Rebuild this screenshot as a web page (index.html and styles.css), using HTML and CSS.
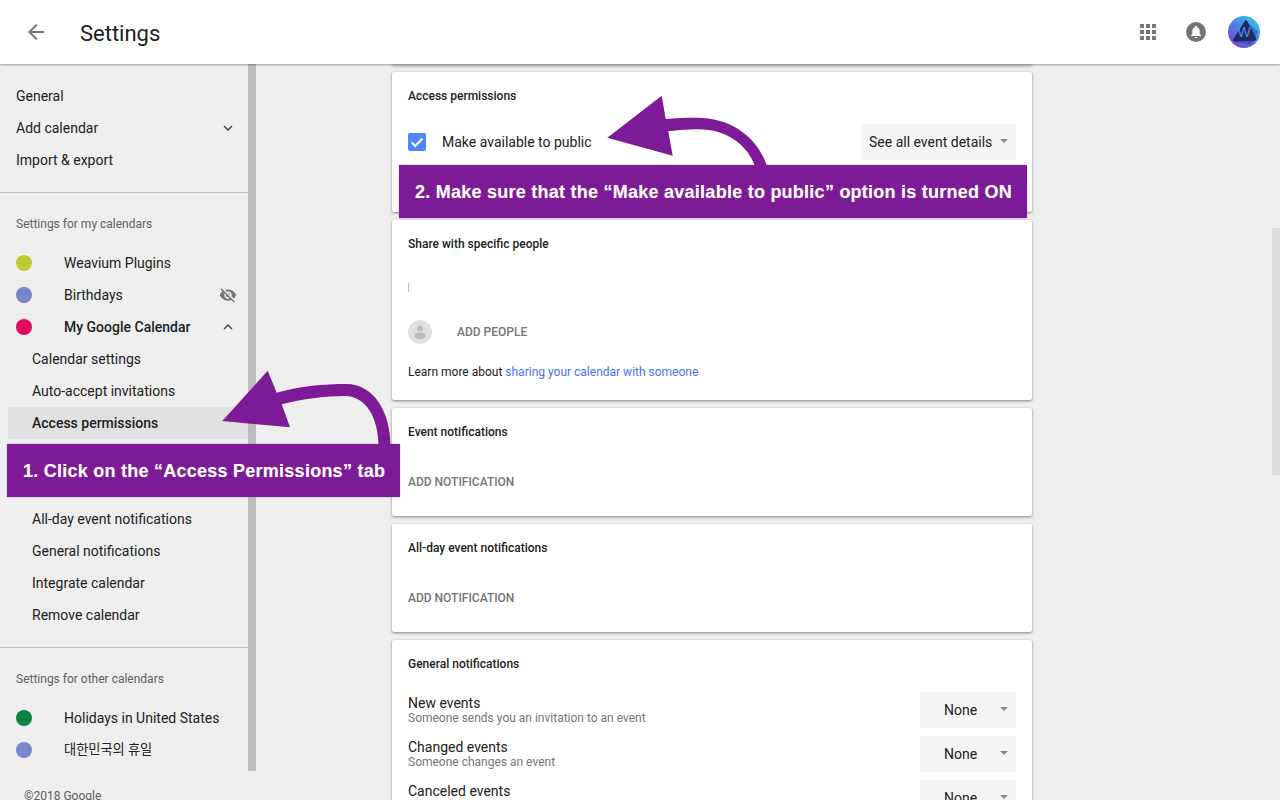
FILE: index.html
```html
<!DOCTYPE html>
<html lang="en">
<head>
<meta charset="utf-8">
<title>Settings</title>
<link rel="stylesheet" href="styles.css">
</head>
<body>
<div class="app">
  <header class="topbar">
    <svg class="back" viewBox="0 0 24 24" width="24" height="24"><path d="M20 11H7.830l5.590-5.590L12 4l-8 8 8 8 1.410-1.410L7.830 13H20v-2z"/></svg>
    <h1 class="title">Settings</h1>
    <div class="top-icons">
      <svg class="apps" viewBox="0 0 16 16" width="16" height="16"><path d="M0 0h4v4H0zM6 0h4v4H6zM12 0h4v4h-4zM0 6h4v4H0zM6 6h4v4H6zM12 6h4v4h-4zM0 12h4v4H0zM6 12h4v4H6zM12 12h4v4h-4z"/></svg>
      <svg class="bell" viewBox="0 0 20 20" width="20" height="20"><circle cx="10" cy="10" r="10" fill="#757575"/><path d="M10 3.800c-.6 0-1 .4-1 1v.5C7.300 5.800 6.300 7.200 6.300 9v3L5 13.300v.7h10v-.7L13.700 12V9c0-1.800-1-3.200-2.700-3.700v-.5c0-.6-.4-1-1-1z" fill="#fff"/><path d="M8.800 15h2.400c0 .6-.5 1-1.200 1s-1.200-.4-1.200-1z" fill="#fff"/></svg>
      <svg class="avatar" viewBox="0 0 32 32" width="32" height="32">
        <defs><linearGradient id="av" x1="0.85" y1="0.05" x2="0.2" y2="0.95"><stop offset="0" stop-color="#36c6f2"/><stop offset="0.5" stop-color="#4a7fe0"/><stop offset="1" stop-color="#7a45d8"/></linearGradient></defs>
        <circle cx="16" cy="16" r="16" fill="url(#av)"/>
        <path d="M4 25 L18 5 L30 16 L23 29 Z" fill="#3c3f9e" opacity=".55"/>
        <path d="M17 4.500 C18 4 19 4.500 19.500 5.500 L28 22 C28.500 23.500 27.500 25 26 25 L7 25.500 C5.500 25.500 5 24 5.500 23 Z" fill="#1f2a63"/>
        <text class="avatar-w" x="16" y="21" text-anchor="middle">W</text>
      </svg>
    </div>
  </header>
  <div class="body">
    <aside class="side">
      <nav class="nav">
        <div class="row">General</div>
        <div class="row">Add calendar<svg class="chev" viewBox="0 0 24 24" width="18" height="18"><path d="M16.590 8.590L12 13.170 7.410 8.590 6 10l6 6 6-6z"/></svg></div>
        <div class="row">Import &amp; export</div>
        <div class="rule"></div>
        <div class="label">Settings for my calendars</div>
        <div class="row cal"><span class="dot dot-lime"></span>Weavium Plugins</div>
        <div class="row cal"><span class="dot dot-blue"></span>Birthdays<svg class="eye" viewBox="0 0 24 24" width="18" height="18"><path d="M12 7c2.760 0 5 2.240 5 5 0 .65-.13 1.260-.36 1.830l2.920 2.920c1.510-1.260 2.700-2.890 3.430-4.750-1.730-4.390-6-7.500-11-7.500-1.400 0-2.740.25-3.980.7l2.160 2.160C10.740 7.130 11.350 7 12 7zM2 4.270l2.280 2.280.46.46C3.080 8.300 1.780 10.020 1 12c1.730 4.390 6 7.500 11 7.500 1.550 0 3.030-.3 4.380-.84l.42.42L19.730 22 21 20.730 3.270 3 2 4.270zM7.530 9.800l1.550 1.550c-.05.21-.08.43-.08.65 0 1.660 1.340 3 3 3 .22 0 .44-.03.65-.08l1.550 1.550c-.67.33-1.410.53-2.200.53-2.760 0-5-2.240-5-5 0-.79.2-1.530.53-2.200zm4.310-.78l3.150 3.150.02-.16c0-1.660-1.340-3-3-3l-.17.01z"/></svg></div>
        <div class="row cal strong"><span class="dot dot-red"></span>My Google Calendar<svg class="chev" viewBox="0 0 24 24" width="18" height="18"><path d="M12 8l-6 6 1.410 1.410L12 10.830l4.590 4.580L18 14z"/></svg></div>
        <div class="row sub">Calendar settings</div>
        <div class="row sub">Auto-accept invitations</div>
        <div class="row sub active">Access permissions</div>
        <div class="hidden-rows"></div>
        <div class="row sub">All-day event notifications</div>
        <div class="row sub">General notifications</div>
        <div class="row sub">Integrate calendar</div>
        <div class="row sub">Remove calendar</div>
        <div class="rule"></div>
        <div class="label">Settings for other calendars</div>
        <div class="row cal"><span class="dot dot-green"></span>Holidays in United States</div>
        <div class="row cal"><span class="dot dot-blue"></span><span class="ko">대한민국의 휴일</span></div>
        <div class="copyright">©2018 Google</div>
      </nav>
      <div class="thumb"></div>
    </aside>
    <main class="content">
      <div class="stub"></div>
      <section class="card card-access">
        <h2 class="card-title">Access permissions</h2>
        <div class="perm-row">
          <span class="check"><svg viewBox="0 0 18 18" width="18" height="18"><path d="M3.800 9.500l3.500 3.500L14.500 5.500" fill="none" stroke="#fff" stroke-width="2"/></svg></span>
          <span class="perm-text">Make available to public</span>
          <span class="select select-wide">See all event details<i class="caret"></i></span>
        </div>
      </section>
      <section class="card card-share">
        <h2 class="card-title">Share with specific people</h2>
        <div class="cursor"></div>
        <div class="add-people">
          <svg class="person" viewBox="0 0 24 24" width="24" height="24"><circle cx="12" cy="12" r="12" fill="#e0e0e0"/><circle cx="12" cy="8.500" r="3" fill="#bdbdbd"/><ellipse cx="12" cy="15.800" rx="6" ry="3.300" fill="#bdbdbd"/></svg>
          <span class="action">ADD PEOPLE</span>
        </div>
        <p class="learn">Learn more about <a class="link">sharing your calendar with someone</a></p>
      </section>
      <section class="card card-notif">
        <h2 class="card-title">Event notifications</h2>
        <div class="action action-notif">ADD NOTIFICATION</div>
      </section>
      <section class="card card-notif">
        <h2 class="card-title">All-day event notifications</h2>
        <div class="action action-notif">ADD NOTIFICATION</div>
      </section>
      <section class="card card-general">
        <h2 class="card-title">General notifications</h2>
        <div class="gen-list">
          <div class="gen-row">
            <div class="gen-text"><div class="gen-name">New events</div><div class="gen-desc">Someone sends you an invitation to an event</div></div>
            <span class="select select-none">None<i class="caret"></i></span>
          </div>
          <div class="gen-row">
            <div class="gen-text"><div class="gen-name">Changed events</div><div class="gen-desc">Someone changes an event</div></div>
            <span class="select select-none">None<i class="caret"></i></span>
          </div>
          <div class="gen-row">
            <div class="gen-text"><div class="gen-name">Canceled events</div><div class="gen-desc">Someone cancels an event</div></div>
            <span class="select select-none">None<i class="caret"></i></span>
          </div>
        </div>
      </section>
    </main>
    <div class="page-track"><div class="page-thumb"></div></div>
  </div>
  <svg class="arrows" viewBox="0 0 1280 800" width="1280" height="800">
    <path class="arrow" d="M222.300 421 L267.700 370.700 L276.700 392.700 C300 386 325 384 346 384 C374 384 390.500 412 390.500 446 L378.500 446 C378.500 418 366 396 345 396 C325 396 302 399 281.700 404.300 L290 427.300 Z"/>
    <path class="arrow" d="M607.300 137.700 L661.700 95.700 L665.700 119 C675 118 686 117.700 696.700 117.700 C732 117.700 758 138 767 166 L755 166 C747 145 727 129.300 698 129.300 C688 129.300 678 130 668.300 131.300 L672.700 155.700 Z"/>
  </svg>
  <div class="callout callout-one">1. Click on the “Access Permissions” tab</div>
  <div class="callout callout-two">2. Make sure that the “Make available to public” option is turned ON</div>
</div>
</body>
</html>
```
FILE: styles.css
```css
* { box-sizing: border-box; }
html, body { margin: 0; padding: 0; }
body {
  font-family: Roboto, "Noto Sans CJK KR", sans-serif;
  font-size: 14px;
  color: #212121;
  background: #eeeeee;
}
.app { position: relative; width: 1280px; height: 800px; overflow: hidden; background: #eeeeee; }

.topbar {
  position: relative;
  z-index: 2;
  height: 64px;
  background: #fff;
  display: flex;
  align-items: center;
  padding: 0 20px 0 24px;
  box-shadow: 0 1px 2px rgba(0, 0, 0, .35);
}
.back { fill: #757575; margin-right: 32px; }
.title { margin: 2px 0 0; font-size: 22px; font-weight: 400; color: #212121; }
.top-icons { margin-left: auto; display: flex; align-items: center; }
.apps { fill: #757575; margin-right: 30px; }
.bell { margin-right: 22px; }
.avatar-w { font-family: "Liberation Sans", sans-serif; font-size: 14px; font-weight: 400; fill: #4f8fe6; }

.body { display: flex; height: 736px; }
.side { width: 256px; display: flex; align-items: flex-start; flex: none; }
.nav { width: 248px; padding-top: 16px; flex: none; }
.thumb { width: 8px; height: 707px; background: #bdbdbd; flex: none; }

.row { height: 32px; display: flex; align-items: center; padding: 0 8px 0 16px; }
.chev { fill: #424242; margin-left: auto; margin-right: 3px; }
.eye { fill: #757575; margin-left: auto; margin-right: 3px; }
.rule { height: 1px; background: #bdbdbd; margin-top: 16px; }
.label { height: 32px; margin: 15px 0 7px; padding-left: 16px; font-size: 12px; line-height: 32px; color: #616161; }
.dot { width: 16px; height: 16px; border-radius: 50%; margin-right: 32px; flex: none; }
.dot-lime { background: #c0ca33; }
.dot-blue { background: #7986cb; }
.dot-red { background: #e00b5f; }
.dot-green { background: #0b8043; }
.ko { font-size: 13.2px; line-height: 16px; margin-top: -1px; }
.strong { font-weight: 500; }
.sub { margin-left: 8px; padding-left: 24px; }
.active { background: #e0e0e0; font-weight: 500; border-radius: 2px 0 0 2px; }
.hidden-rows { height: 64px; }
.copyright { margin-top: 23px; padding-left: 24px; font-size: 12px; line-height: 14px; color: #616161; }

.content { width: 1016px; padding-left: 136px; flex: none; }
.stub { width: 640px; height: 1px; margin-bottom: 7px; background: #d0d0d0; box-shadow: 0 1px 3px rgba(0, 0, 0, .55); }
.card {
  width: 640px;
  background: #fff;
  border-radius: 2px;
  padding: 16px;
  margin-bottom: 8px;
  box-shadow: 0 1px 3px rgba(0, 0, 0, .45);
}
.card-title { margin: 0; font-size: 12px; line-height: 16px; font-weight: 500; color: #212121; }
.card-access { height: 140px; }
.perm-row { display: flex; align-items: center; margin-top: 20px; height: 36px; }
.check { width: 18px; height: 18px; border-radius: 2px; background: #4d86f5; margin-right: 16px; display: block; flex: none; }
.check svg { display: block; }
.select {
  display: flex;
  align-items: center;
  height: 36px;
  background: #f5f5f5;
  border-radius: 2px;
  position: relative;
  flex: none;
}
.select-wide { width: 155px; margin-left: auto; padding-left: 8px; }
.select-none { width: 96px; margin-left: auto; padding-left: 24px; }
.caret {
  position: absolute;
  right: 8px;
  top: 15px;
  width: 0;
  height: 0;
  border-left: 4px solid transparent;
  border-right: 4px solid transparent;
  border-top: 4px solid #8a8a8a;
}
.card-share { height: 180px; }
.cursor { width: 1px; height: 9px; margin-top: 31px; background: #b9b4f0; }
.add-people { display: flex; align-items: center; height: 24px; margin-top: 28px; }
.person { margin-right: 25px; flex: none; }
.action { font-size: 12px; font-weight: 500; color: #757575; line-height: 16px; }
.learn { margin: 20px 0 0; font-size: 12px; line-height: 16px; color: #212121; }
.link { color: #4b72ee; }
.card-notif { height: 108px; }
.action-notif { margin-top: 34px; }
.card-general { height: 200px; }
.gen-list { display: flex; flex-direction: column; gap: 8px; margin-top: 20px; }
.gen-row { display: flex; align-items: center; height: 36px; }
.gen-name { font-size: 14px; line-height: 16px; color: #212121; }
.gen-desc { font-size: 12px; line-height: 14px; color: #757575; }

.page-track { width: 8px; flex: none; padding-top: 164px; }
.page-thumb { width: 8px; height: 247px; background: #dcdcdc; }

.arrows { position: absolute; left: 0; top: 0; z-index: 3; pointer-events: none; }
.arrow { fill: #7d1a96; }
.callout {
  position: absolute;
  z-index: 4;
  height: 53px;
  background: #7d1a96;
  color: #fff;
  font-family: "Liberation Sans", Arial, sans-serif;
  font-weight: 700;
  font-size: 18px;
  letter-spacing: .25px;
  line-height: 55px;
  white-space: nowrap;
  overflow: hidden;
  box-shadow: 0 0 1px rgba(125, 26, 150, .6);
  text-shadow: 0 0 1px rgba(255, 255, 255, .35);
}
.callout-one { left: 7px; top: 444px; width: 393px; padding-left: 16px; }
.callout-two { left: 399px; top: 165px; width: 628px; padding-left: 16px; }
```
